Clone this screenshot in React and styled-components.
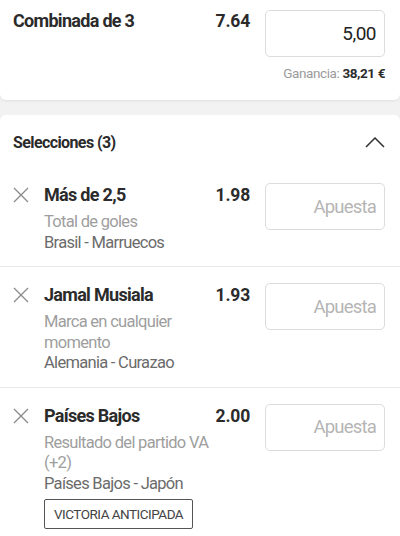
import styled, { createGlobalStyle } from "styled-components";

const GlobalStyle = createGlobalStyle`
  body {
    margin: 0;
    background: #f2f2f2;
    font-family: "Roboto", "Liberation Sans", sans-serif;
    color: #222;
  }
`;

const selections = [
  {
    title: "Más de 2,5",
    odds: "1.98",
    market: ["Total de goles"],
    match: "Brasil - Marruecos",
  },
  {
    title: "Jamal Musiala",
    odds: "1.93",
    market: ["Marca en cualquier", "momento"],
    match: "Alemania - Curazao",
  },
  {
    title: "Países Bajos",
    odds: "2.00",
    market: ["Resultado del partido VA", "(+2)"],
    match: "Países Bajos - Japón",
    badge: "VICTORIA ANTICIPADA",
  },
];

const CloseIcon = () => (
  <svg width="16" height="16" viewBox="0 0 16 16">
    <path d="M1 1 L15 15 M15 1 L1 15" stroke="#8a8a8a" strokeWidth="1.3" fill="none" />
  </svg>
);

const ChevronUp = () => (
  <svg width="20" height="11" viewBox="0 0 20 11">
    <path d="M1 10 L10 1 L19 10" stroke="#333" strokeWidth="1.5" fill="none" />
  </svg>
);

const App = () => {
  return (
    <>
      <GlobalStyle />
      <Page>
        <SummaryCard>
          <SummaryRow>
            <SummaryTitle>Combinada de 3</SummaryTitle>
            <Odds>7.64</Odds>
            <StakeBox $filled>5,00</StakeBox>
          </SummaryRow>
          <Winnings>
            Ganancia: <strong>38,21 €</strong>
          </Winnings>
        </SummaryCard>

        <ListCard>
          <ListHeader>
            <HeaderTitle>Selecciones (3)</HeaderTitle>
            <ChevronUp />
          </ListHeader>
          {selections.map((s, i) => (
            <Selection key={s.title} $first={i === 0}>
              <RemoveBtn>
                <CloseIcon />
              </RemoveBtn>
              <Info>
                <PickTitle>{s.title}</PickTitle>
                <Market>
                  {s.market.map((m) => (
                    <div key={m}>{m}</div>
                  ))}
                </Market>
                <Match>{s.match}</Match>
                {s.badge && <Badge>{s.badge}</Badge>}
              </Info>
              <Odds $row>{s.odds}</Odds>
              <StakeBox>Apuesta</StakeBox>
            </Selection>
          ))}
        </ListCard>
      </Page>
    </>
  );
};

export default App;

const Page = styled.div`
  width: 400px;
  height: 536px;
  overflow: hidden;
  background: #f2f2f2;
  display: flex;
  flex-direction: column;
  gap: 15px;
`;

const SummaryCard = styled.div`
  background: #fff;
  padding: 10px 15px 0 13px;
  height: 100px;
  flex-shrink: 0;
  box-sizing: border-box;
  border-radius: 0 0 6px 6px;
  box-shadow: 0 1px 3px rgba(0, 0, 0, 0.08);
`;

const SummaryRow = styled.div`
  display: flex;
  align-items: flex-start;
`;

const SummaryTitle = styled.div`
  flex: 1;
  font-size: 18px;
  font-weight: 700;
  letter-spacing: -0.7px;
  line-height: 22px;
  color: #2b2b2b;
`;

const Odds = styled.div`
  width: 38px;
  text-align: right;
  font-size: 17.5px;
  font-weight: 700;
  letter-spacing: -0.2px;
  line-height: ${(p) => (p.$row ? "24px" : "22px")};
  color: #2b2b2b;
  margin-right: 15px;
  flex-shrink: 0;
`;

const StakeBox = styled.div`
  width: 120px;
  height: 47px;
  box-sizing: border-box;
  border: 1px solid #dcdcdc;
  border-radius: 5px;
  display: flex;
  align-items: center;
  justify-content: flex-end;
  padding-right: 8px;
  font-size: ${(p) => (p.$filled ? "19px" : "18.5px")};
  letter-spacing: ${(p) => (p.$filled ? "-0.5px" : "-0.8px")};
  color: ${(p) => (p.$filled ? "#222" : "#b5b5b5")};
  flex-shrink: 0;
`;

const Winnings = styled.div`
  text-align: right;
  margin-top: 8px;
  font-size: 13.5px;
  letter-spacing: -0.4px;
  color: #9b9b9b;

  strong {
    color: #2b2b2b;
    font-weight: 700;
  }
`;

const ListCard = styled.div`
  background: #fff;
  flex: 1;
  border-radius: 6px 6px 0 0;
`;

const ListHeader = styled.div`
  display: flex;
  align-items: center;
  justify-content: space-between;
  padding: 0 15px 0 13px;
  height: 54px;
`;

const HeaderTitle = styled.div`
  font-size: 16px;
  font-weight: 700;
  letter-spacing: -0.6px;
  color: #2b2b2b;
`;

const Selection = styled.div`
  display: flex;
  align-items: flex-start;
  padding: ${(p) => (p.$first ? "14px" : "16px")} 15px 13px 13px;
  border-top: ${(p) => (p.$first ? "none" : "1px solid #e9e9e9")};
`;

const RemoveBtn = styled.div`
  width: 31px;
  padding-top: 4px;
  flex-shrink: 0;
`;

const Info = styled.div`
  flex: 1;
  min-width: 0;
`;

const PickTitle = styled.div`
  font-size: 18px;
  font-weight: 700;
  letter-spacing: -0.7px;
  line-height: 24px;
  color: #2b2b2b;
  margin-bottom: 5px;
`;

const Market = styled.div`
  font-size: 16.5px;
  letter-spacing: -0.7px;
  line-height: 20.5px;
  color: #9e9e9e;
`;

const Match = styled.div`
  font-size: 16.5px;
  letter-spacing: -0.7px;
  line-height: 20.5px;
  color: #6b6b6b;
`;

const Badge = styled.div`
  display: inline-block;
  white-space: nowrap;
  margin-top: 5px;
  border: 1px solid #555;
  border-radius: 2px;
  padding: 0 9px;
  height: 30px;
  line-height: 28px;
  box-sizing: border-box;
  font-size: 13.5px;
  letter-spacing: -0.5px;
  color: #444;
`;
